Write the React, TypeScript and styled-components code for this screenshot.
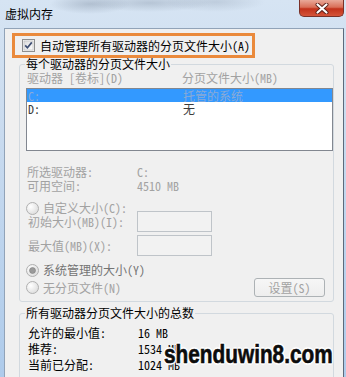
import React from "react";
import styled, { createGlobalStyle } from "styled-components";

const FONT = `"Noto Sans Mono CJK SC", "Noto Sans CJK SC", "Liberation Mono", monospace`;

const Global = createGlobalStyle`
  html, body { margin: 0; padding: 0; background: #c6d9ee; }
  body { width: 346px; height: 377px; overflow: hidden; }
`;

const Window = styled.div`
  position: relative;
  width: 346px;
  height: 377px;
  display: flex;
  flex-direction: column;
  overflow: hidden;
  background: linear-gradient(180deg, #d6e4f3 0%, #c9dbef 35%, #aecbeb 100%);
  font-family: ${FONT};
  font-size: 12px;
  line-height: 12px;
  color: #000;
`;

const TitleBar = styled.div`
  height: 28px;
  flex-shrink: 0;
  display: flex;
  align-items: flex-start;
  justify-content: space-between;
  background:
    radial-gradient(ellipse 40px 10px at 90px 4px, rgba(110, 125, 145, 0.35), transparent),
    radial-gradient(ellipse 60px 9px at 150px 3px, rgba(110, 125, 145, 0.3), transparent),
    radial-gradient(ellipse 50px 10px at 215px 2px, rgba(120, 135, 155, 0.25), transparent);
`;

const Title = styled.div`
  padding: 8px 0 0 5px;
`;

const CloseButton = styled.div`
  width: 45px;
  height: 17px;
  margin-right: 2px;
  box-sizing: border-box;
  border: 1px solid #7a3128;
  border-top: none;
  border-radius: 0 0 5px 5px;
  background: linear-gradient(180deg, #e9a999 0%, #d96f58 45%, #c2321b 55%, #d4553a 100%);
  display: flex;
  align-items: center;
  justify-content: center;
`;

const Body = styled.div`
  flex: 1;
  display: flex;
  padding: 0 2px 0 4px;
  min-height: 0;
`;

const Client = styled.div`
  flex: 1;
  display: flex;
  flex-direction: column;
  background: #f0f0f0;
  border-top: 1px solid #91a3b8;
  border-left: 1px solid #91a3b8;
  border-right: 1px solid #5c6a7b;
  overflow: hidden;
`;

const Highlight = styled.div`
  margin: 4px 0 0 7px;
  width: 243px;
  height: 25px;
  box-sizing: border-box;
  border: 3px solid #ea8a3c;
  display: flex;
  align-items: center;
  padding-left: 7px;
  gap: 5px;
  flex-shrink: 0;
`;

const Group = styled.fieldset<{ $top?: number }>`
  margin: ${(p) => p.$top ?? 0}px 9px 0 14px;
  padding: 0;
  border: 1px solid #d2d9df;
  border-radius: 3px;
  min-inline-size: 0;
  flex-shrink: 0;
  display: flex;
  flex-direction: column;
`;

const Legend = styled.legend`
  margin-left: 5px;
  padding: 0 1px;
  line-height: 12px;
  color: #000;
`;

const Cols = styled.div<{ $first: number; $pad: number; $h: number; $muted?: boolean }>`
  display: grid;
  grid-template-columns: ${(p) => p.$first}px 1fr;
  align-items: center;
  height: ${(p) => p.$h}px;
  line-height: ${(p) => p.$h}px;
  padding-left: ${(p) => p.$pad}px;
  color: ${(p) => (p.$muted ? "#a2a2a2" : "#000")};
  white-space: nowrap;
`;

const HeaderRow = styled(Cols)`
  margin-top: 2px;
`;

const ListBox = styled.div`
  margin: 4px 0 0 6px;
  height: 63px;
  box-sizing: border-box;
  border: 1px solid #828790;
  background: #fff;
  display: flex;
  flex-direction: column;
`;

const ListRow = styled.div<{ $selected?: boolean }>`
  display: grid;
  grid-template-columns: 155px 1fr;
  align-items: center;
  height: 13px;
  line-height: 13px;
  padding-left: 1px;
  background: ${(p) => (p.$selected ? "#3399ff" : "transparent")};
  color: ${(p) => (p.$selected ? "#8aaad6" : "#3c3c3c")};
`;

const InfoBlock = styled.div`
  margin-top: 14px;
  display: flex;
  flex-direction: column;
`;

const RadioRow = styled.div<{ $top: number; $color?: string }>`
  margin-top: ${(p) => p.$top}px;
  height: 14px;
  line-height: 14px;
  display: flex;
  align-items: center;
  gap: 4px;
  padding-left: 6px;
  color: ${(p) => p.$color ?? "#a2a2a2"};
  white-space: nowrap;
`;

const FieldRow = styled.div<{ $top: number }>`
  margin-top: ${(p) => p.$top}px;
  height: 21px;
  display: grid;
  grid-template-columns: 109px 75px;
  align-items: center;
  padding-left: 8px;
  color: #a2a2a2;
  white-space: nowrap;
`;

const TextBox = styled.div`
  height: 21px;
  box-sizing: border-box;
  border: 1px solid #bfc4c9;
  background: #f2f2f2;
`;

const BottomRow = styled.div`
  margin-top: 1px;
  height: 19px;
  display: flex;
  align-items: center;
  justify-content: space-between;
  padding-right: 8px;
  margin-bottom: 4px;
`;

const Button = styled.div`
  width: 71px;
  height: 19px;
  box-sizing: border-box;
  border: 1px solid #adb2b5;
  border-radius: 3px;
  background: linear-gradient(180deg, #f6f6f6, #eeeeee);
  color: #a2a2a2;
  display: flex;
  align-items: center;
  justify-content: center;
`;

const TotalBlock = styled.div`
  margin-top: 6px;
  padding-bottom: 12px;
  display: flex;
  flex-direction: column;
`;

const Watermark = styled.div`
  position: absolute;
  left: 164px;
  top: 341px;
  font-family: "Liberation Sans", Arial, sans-serif;
  font-weight: 700;
  font-size: 26px;
  line-height: 26px;
  color: #0c0c0c;
  transform: scaleX(0.8);
  transform-origin: left top;
  white-space: nowrap;
  -webkit-text-stroke: 0.6px #0c0c0c;
  text-shadow:
    1px 1px 0 #fff, -1px -1px 0 #fff, 1px -1px 0 #fff, -1px 1px 0 #fff,
    0 2px 1px #fff, 2px 0 1px #fff, 0 -2px 1px #fff, -2px 0 1px #fff;
`;

const CheckBox = () => (
  <svg width="13" height="13" viewBox="0 0 13 13">
    <defs>
      <linearGradient id="cbg" x1="0" y1="0" x2="1" y2="1">
        <stop offset="0" stopColor="#dcdcdc" />
        <stop offset="1" stopColor="#ffffff" />
      </linearGradient>
    </defs>
    <rect x="0.5" y="0.5" width="12" height="12" fill="#f4f4f4" stroke="#8e8f8f" />
    <rect x="2" y="2" width="9" height="9" fill="url(#cbg)" stroke="#b8b8b8" strokeWidth="0.6" />
    <path d="M3.2 6.4 L5.4 8.8 L9.8 3.4" fill="none" stroke="#3f4f73" strokeWidth="1.7" />
  </svg>
);

const Radio = ({ checked }: { checked?: boolean }) => (
  <svg width="13" height="13" viewBox="0 0 13 13">
    <defs>
      <radialGradient id="rbg" cx="0.35" cy="0.35" r="0.8">
        <stop offset="0" stopColor="#ffffff" />
        <stop offset="1" stopColor="#d8d8d8" />
      </radialGradient>
    </defs>
    <circle cx="6.5" cy="6.5" r="6" fill="url(#rbg)" stroke="#b0b0b0" />
    {checked && <circle cx="6.5" cy="6.5" r="3" fill="#9a9a9a" stroke="#808080" strokeWidth="0.6" />}
  </svg>
);

const CloseGlyph = () => (
  <svg width="14" height="11" viewBox="0 0 14 11">
    <path d="M2.5 1.5 L11.5 9.5 M11.5 1.5 L2.5 9.5" stroke="#5a2018" strokeWidth="4" strokeLinecap="round" />
    <path d="M2.5 1.5 L11.5 9.5 M11.5 1.5 L2.5 9.5" stroke="#ffffff" strokeWidth="2.2" strokeLinecap="round" />
  </svg>
);

export default function App() {
  return (
    <>
      <Global />
      <Window>
        <TitleBar>
          <Title>虚拟内存</Title>
          <CloseButton>
            <CloseGlyph />
          </CloseButton>
        </TitleBar>
        <Body>
          <Client>
            <Highlight>
              <CheckBox />
              <span>自动管理所有驱动器的分页文件大小(A)</span>
            </Highlight>

            <Group>
              <Legend>每个驱动器的分页文件大小</Legend>
              <HeaderRow $first={155} $pad={7} $h={12} $muted>
                <span>驱动器 [卷标](D)</span>
                <span>分页文件大小(MB)</span>
              </HeaderRow>
              <ListBox>
                <ListRow $selected>
                  <span>C:</span>
                  <span>托管的系统</span>
                </ListRow>
                <ListRow>
                  <span>D:</span>
                  <span>无</span>
                </ListRow>
              </ListBox>
              <InfoBlock>
                <Cols $first={110} $pad={7} $h={14} $muted>
                  <span>所选驱动器:</span>
                  <span>C:</span>
                </Cols>
                <Cols $first={110} $pad={7} $h={14} $muted>
                  <span>可用空间:</span>
                  <span>4510 MB</span>
                </Cols>
              </InfoBlock>
              <RadioRow $top={8}>
                <Radio />
                <span>自定义大小(C):</span>
              </RadioRow>
              <FieldRow $top={-4}>
                <span>初始大小(MB)(I):</span>
                <TextBox />
              </FieldRow>
              <FieldRow $top={3}>
                <span>最大值(MB)(X):</span>
                <TextBox />
              </FieldRow>
              <RadioRow $top={7} $color="#747474">
                <Radio checked />
                <span>系统管理的大小(Y)</span>
              </RadioRow>
              <BottomRow>
                <RadioRow $top={0}>
                  <Radio />
                  <span>无分页文件(N)</span>
                </RadioRow>
                <Button>设置(S)</Button>
              </BottomRow>
            </Group>

            <Group $top={5}>
              <Legend>所有驱动器分页文件大小的总数</Legend>
              <TotalBlock>
                <Cols $first={110} $pad={8} $h={16}>
                  <span>允许的最小值:</span>
                  <span>16 MB</span>
                </Cols>
                <Cols $first={110} $pad={8} $h={16}>
                  <span>推荐:</span>
                  <span>1534 MB</span>
                </Cols>
                <Cols $first={110} $pad={8} $h={16}>
                  <span>当前已分配:</span>
                  <span>1024 MB</span>
                </Cols>
              </TotalBlock>
            </Group>
          </Client>
        </Body>
        <Watermark>shenduwin8.com</Watermark>
      </Window>
    </>
  );
}
